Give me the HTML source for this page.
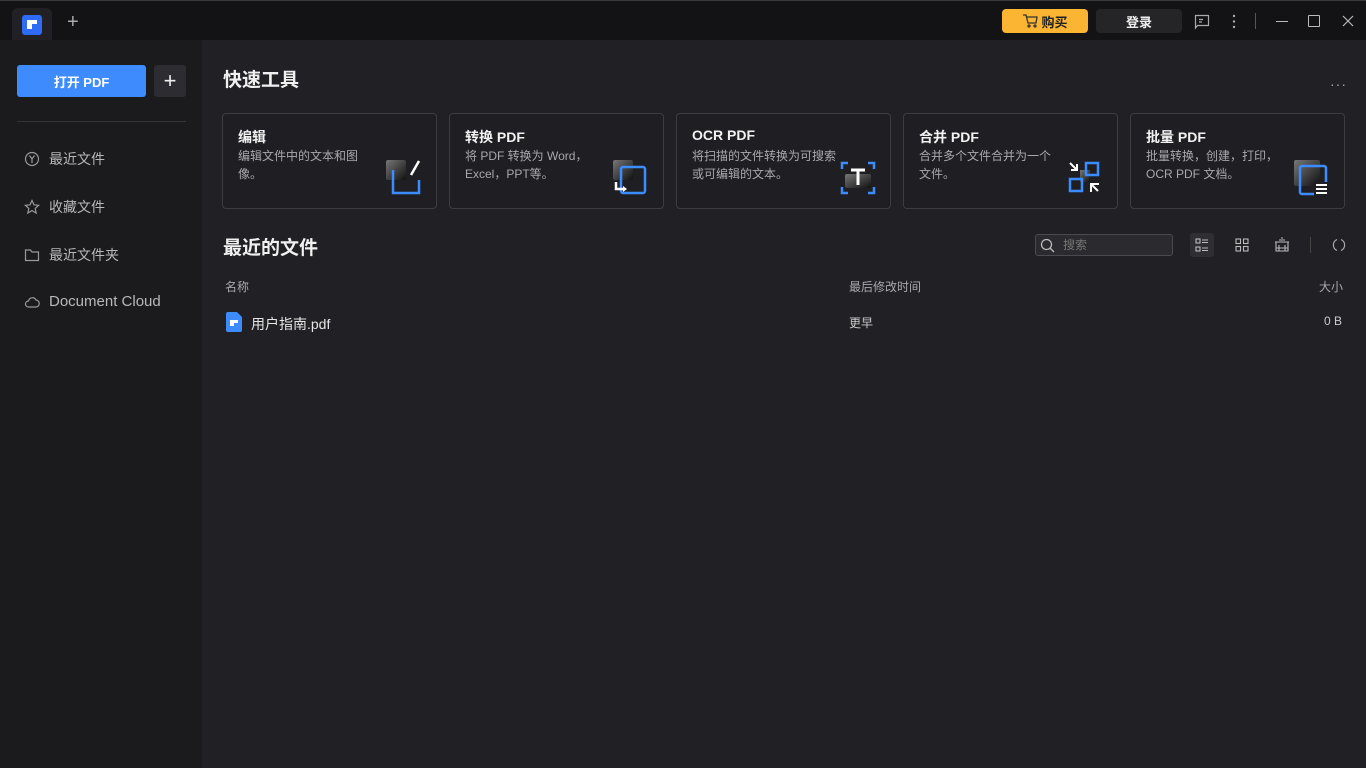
<!DOCTYPE html>
<html><head><meta charset="utf-8"><style>
*{margin:0;padding:0;box-sizing:border-box}
body{width:1366px;height:768px;overflow:hidden;background:#202025;font-family:"Liberation Sans","Noto Sans CJK SC",sans-serif;color:#ddd;position:relative}
.abs{position:absolute}
.top{left:0;top:0;width:1366px;height:40px;background:#131316;border-top:1px solid #3a3a3e}
.side{left:0;top:40px;width:202px;height:728px;background:#1b1b1e}
.card{position:absolute;top:113px;width:215px;height:96px;border:1px solid #3c3c42;border-radius:4px;background:#1f1f23}
.card h3{position:absolute;left:15px;top:13px;font-size:14px;color:#f2f2f2;font-weight:bold}
.card p{position:absolute;left:15px;top:34px;width:140px;font-size:12px;line-height:17.5px;color:#a8a8ad}
.card svg{position:absolute;right:14px;top:46px}
.nav{position:absolute;left:24px;font-size:14px;color:#b8b8bc;display:flex;align-items:center;gap:9px}
</style></head><body>
<div class="abs top"></div>
<div class="abs" style="left:12px;top:8px;width:40px;height:32px;background:#202025;border-radius:6px 6px 0 0"></div>
<svg class="abs" style="left:22px;top:15px" width="20" height="20"><rect width="20" height="20" rx="3" fill="#2f6cf6"/><rect x="5" y="5" width="10" height="4" fill="#fff"/><rect x="5" y="9" width="5" height="5" fill="#fff"/></svg>
<div class="abs" style="left:67px;top:11px;font-size:20px;color:#aaa;font-weight:300">+</div>
<div class="abs" style="left:1002px;top:9px;width:86px;height:24px;background:#fbb532;border-radius:4px;color:#222;font-size:13px;font-weight:bold;display:flex;align-items:center;justify-content:center;gap:3px"><svg width="16" height="14" fill="none" stroke="#333" stroke-width="1.3"><path d="M1 1h3l2 8h8l1-6H5"/><circle cx="7" cy="12" r="1"/><circle cx="13" cy="12" r="1"/></svg>购买</div>
<div class="abs" style="left:1096px;top:9px;width:86px;height:24px;background:#252528;border-radius:4px;color:#eee;font-size:13px;font-weight:bold;display:flex;align-items:center;justify-content:center">登录</div>
<svg class="abs" style="left:1194px;top:14px" width="16" height="16" fill="none" stroke="#aaa" stroke-width="1.2"><path d="M1.5 1.5h13v10h-11l-2 2.5z"/><path d="M5 5.5h4M5 8h3"/></svg>
<svg class="abs" style="left:1232px;top:14px" width="4" height="16" fill="#aaa"><circle cx="2" cy="2" r="1.2"/><circle cx="2" cy="7.5" r="1.2"/><circle cx="2" cy="13" r="1.2"/></svg>
<div class="abs" style="left:1255px;top:13px;width:1px;height:16px;background:#555"></div>
<div class="abs" style="left:1276px;top:21px;width:12px;height:1px;background:#bbb"></div>
<div class="abs" style="left:1308px;top:15px;width:12px;height:12px;border:1.2px solid #bbb;border-radius:1px"></div>
<svg class="abs" style="left:1342px;top:15px" width="12" height="12" stroke="#bbb" stroke-width="1.2"><path d="M1 1l10 10M11 1L1 11"/></svg>
<div class="abs side"></div>
<div class="abs" style="left:17px;top:65px;width:129px;height:32px;background:#3d8bfd;border-radius:3px;color:#fff;font-size:13px;font-weight:bold;display:flex;align-items:center;justify-content:center">打开 PDF</div>
<div class="abs" style="left:154px;top:65px;width:32px;height:32px;background:#2d2d31;border-radius:3px;color:#eee;font-size:22px;display:flex;align-items:center;justify-content:center">+</div>
<div class="abs" style="left:17px;top:121px;width:169px;height:1px;background:#333"></div>
<div class="nav" style="top:149px"><svg width="16" height="16" fill="none" stroke="#999" stroke-width="1.2"><circle cx="8" cy="8" r="6.5"/><path d="M5.5 4.5L8 8l2.5-3.5M8 8v4"/></svg>最近文件</div>
<div class="nav" style="top:197px"><svg width="16" height="16" fill="none" stroke="#999" stroke-width="1.2"><path d="M8 1.5l2 4.3 4.6.5-3.4 3.1 1 4.6L8 11.6 3.8 14l1-4.6L1.4 6.3 6 5.8z"/></svg>收藏文件</div>
<div class="nav" style="top:245px"><svg width="16" height="16" fill="none" stroke="#999" stroke-width="1.2"><path d="M1.5 3h5l1.5 2h6.5v8.5h-13z"/></svg>最近文件夹</div>
<div class="nav" style="top:293px;font-size:15px"><svg width="16" height="16" fill="none" stroke="#999" stroke-width="1.2"><path d="M4.5 13a3 3 0 010-6 4 4 0 017.5-1 3.5 3.5 0 01-.5 7z"/></svg>Document Cloud</div>
<div class="abs" style="left:223px;top:65px;font-size:19px;font-weight:bold;color:#f0f0f0">快速工具</div>
<div class="abs" style="left:1330px;top:76px;font-size:14px;color:#aaa;letter-spacing:1px">···</div>
<div class="card" style="left:222px"><h3>编辑</h3><p>编辑文件中的文本和图像。</p>
<svg width="36" height="36"><defs><linearGradient id="g" x1="0" y1="0" x2="1" y2="1"><stop offset="0" stop-color="#777"/><stop offset="1" stop-color="#111"/></linearGradient></defs><rect x="0" y="0" width="20" height="20" rx="2" fill="url(#g)"/><path d="M7 10v23h26V20" fill="none" stroke="#3a8cff" stroke-width="2.5"/><path d="M25 15l8-14" stroke="#fff" stroke-width="2.5"/></svg></div>
<div class="card" style="left:449px"><h3>转换 PDF</h3><p style="width:150px">将 PDF 转换为 Word，Excel，PPT等。</p>
<svg width="36" height="36"><rect x="0" y="0" width="20" height="20" rx="2" fill="url(#g)"/><rect x="8" y="7" width="24" height="26" rx="2" fill="none" stroke="#3a8cff" stroke-width="2.5"/><path d="M3 22v7h8" fill="none" stroke="#fff" stroke-width="2.5"/><path d="M10 26l4 3-4 3z" fill="#fff"/></svg></div>
<div class="card" style="left:676px"><h3>OCR PDF</h3><p style="width:150px">将扫描的文件转换为可搜索或可编辑的文本。</p>
<svg width="36" height="36"><path d="M2 9V3h6M28 3h6v6M34 27v6h-6M8 33H2v-6" fill="none" stroke="#3a8cff" stroke-width="2.5"/><rect x="5" y="14" width="26" height="14" rx="2" fill="url(#g)"/><path d="M11 10h14M18 10v15" stroke="#fff" stroke-width="3"/></svg></div>
<div class="card" style="left:903px"><h3>合并 PDF</h3><p style="width:140px">合并多个文件合并为一个文件。</p>
<svg width="36" height="36"><rect x="13" y="10" width="10" height="12" fill="url(#g)"/><rect x="19" y="3" width="12" height="12" fill="none" stroke="#3a8cff" stroke-width="2.5"/><rect x="3" y="19" width="12" height="12" fill="none" stroke="#3a8cff" stroke-width="2.5"/><path d="M3 3l6 6M25 25l6 6" stroke="#fff" stroke-width="2"/><path d="M10 4v6H4M24 32v-8h8" fill="none" stroke="#fff" stroke-width="2"/></svg></div>
<div class="card" style="left:1130px"><h3>批量 PDF</h3><p style="width:140px">批量转换，创建，打印，OCR PDF 文档。</p>
<svg width="36" height="36"><rect x="0" y="0" width="26" height="26" rx="2" fill="url(#g)"/><rect x="6" y="6" width="26" height="28" rx="2" fill="none" stroke="#3a8cff" stroke-width="2.5"/><rect x="20" y="22" width="14" height="14" fill="#1f1f23"/><path d="M22 25h11M22 29h11M22 33h11" stroke="#fff" stroke-width="2"/></svg></div>
<div class="abs" style="left:223px;top:233px;font-size:19px;font-weight:bold;color:#f0f0f0">最近的文件</div>
<div class="abs" style="left:1035px;top:234px;width:138px;height:22px;border:1px solid #4a4a50;border-radius:3px;background:#2a2a2f;font-size:12px;color:#777;padding-left:27px;line-height:20px">搜索</div>
<svg class="abs" style="left:1040px;top:238px" width="15" height="15" fill="none" stroke="#bbb" stroke-width="1.3"><circle cx="6.5" cy="6.5" r="5"/><path d="M10 10l4 4"/></svg>
<div class="abs" style="left:1190px;top:233px;width:24px;height:24px;background:#2e2e33;border-radius:3px"></div>
<svg class="abs" style="left:1195px;top:238px" width="14" height="14" fill="none" stroke="#bbb" stroke-width="1.1"><rect x="1" y="1" width="4" height="4"/><rect x="1" y="9" width="4" height="4"/><path d="M7 2h6M7 4.5h6M7 10h6M7 12.5h6"/></svg>
<svg class="abs" style="left:1235px;top:238px" width="14" height="14" fill="none" stroke="#bbb" stroke-width="1.1"><rect x="1" y="1" width="4.5" height="4.5"/><rect x="8.5" y="1" width="4.5" height="4.5"/><rect x="1" y="8.5" width="4.5" height="4.5"/><rect x="8.5" y="8.5" width="4.5" height="4.5"/></svg>
<svg class="abs" style="left:1274px;top:237px" width="16" height="16" fill="none" stroke="#bbb" stroke-width="1.1"><path d="M1 5h14M2 5v9h12V5M5 3h6M7 1h2M5 8v6M11 8v6M2 11h12"/></svg>
<div class="abs" style="left:1310px;top:237px;width:1px;height:16px;background:#444"></div>
<svg class="abs" style="left:1331px;top:237px" width="16" height="16" fill="none" stroke="#aaa" stroke-width="1.2"><path d="M6 2.5a6 6 0 000 11M10 2.5a6 6 0 010 11"/></svg>
<div class="abs" style="left:225px;top:278px;font-size:12px;color:#a8a8ad">名称</div>
<div class="abs" style="left:849px;top:278px;font-size:12px;color:#a8a8ad">最后修改时间</div>
<div class="abs" style="left:1319px;top:278px;font-size:12px;color:#a8a8ad">大小</div>
<svg class="abs" style="left:226px;top:312px" width="16" height="20"><path d="M0 2a2 2 0 012-2h9l5 5v13a2 2 0 01-2 2H2a2 2 0 01-2-2z" fill="#3d8bfd"/><rect x="4" y="8" width="8" height="3" fill="#fff"/><rect x="4" y="11" width="4" height="3" fill="#fff"/></svg>
<div class="abs" style="left:251px;top:314px;font-size:14px;color:#e6e6e6">用户指南.pdf</div>
<div class="abs" style="left:849px;top:314px;font-size:12px;color:#ccc">更早</div>
<div class="abs" style="left:1324px;top:314px;font-size:12px;color:#ccc">0 B</div>
</body></html>
